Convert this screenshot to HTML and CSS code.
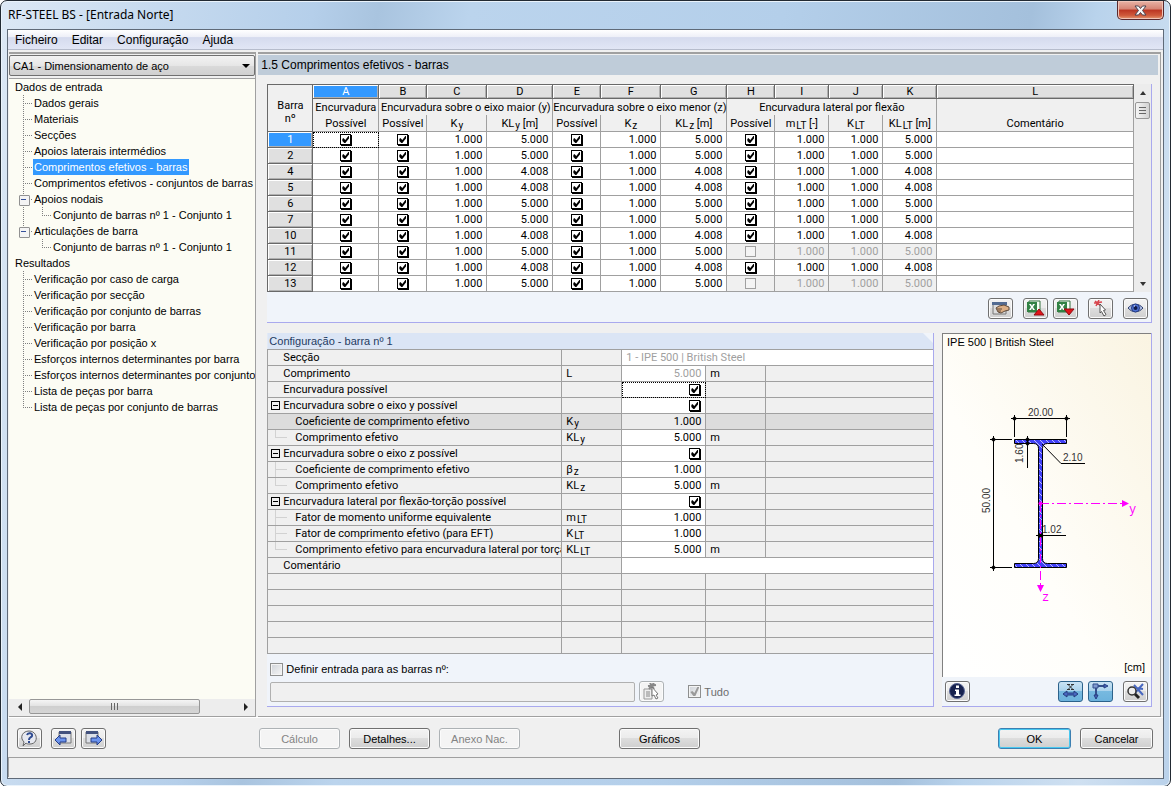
FILE: index.html
```html
<!DOCTYPE html>
<html lang="pt">
<head>
<meta charset="utf-8">
<title>RF-STEEL BS - [Entrada Norte]</title>
<link rel="stylesheet" href="styles.css">
</head>
<body>
<div class="window">
  <header class="titlebar">
    <h1 class="window-title">RF-STEEL BS - [Entrada Norte]</h1>
    <button class="close" aria-label="Fechar"><svg width="13" height="11" viewBox="0 0 13 11"><path d="M1 1h3.500l2 2.500 2-2.500H12L8.500 5.500 12 10H8.500l-2-2.500-2 2.500H1l3.500-4.500z" fill="#f8f8f8" stroke="#4d4450"/></svg></button>
  </header>
  <div class="client">
    <nav class="menu">
      <button>Ficheiro</button><button>Editar</button><button>Configuração</button><button>Ajuda</button>
    </nav>
    <main class="workspace">
      <aside class="sidebar">
        <div class="case"><select aria-label="Caso"><option>CA1 - Dimensionamento de aço</option></select></div>
        <div class="tree-view">
          <ul class="tree">
            <li>Dados de entrada
              <ul>
                <li>Dados gerais</li>
                <li>Materiais</li>
                <li>Secções</li>
                <li>Apoios laterais intermédios</li>
                <li><span class="selected">Comprimentos efetivos - barras</span></li>
                <li>Comprimentos efetivos - conjuntos de barras</li>
                <li class="open">Apoios nodais
                  <ul><li>Conjunto de barras nº 1 - Conjunto 1</li></ul>
                </li>
                <li class="open">Articulações de barra
                  <ul><li>Conjunto de barras nº 1 - Conjunto 1</li></ul>
                </li>
              </ul>
            </li>
            <li>Resultados
              <ul>
                <li>Verificação por caso de carga</li>
                <li>Verificação por secção</li>
                <li>Verificação por conjunto de barras</li>
                <li>Verificação por barra</li>
                <li>Verificação por posição x</li>
                <li>Esforços internos determinantes por barra</li>
                <li>Esforços internos determinantes por conjunto</li>
                <li>Lista de peças por barra</li>
                <li>Lista de peças por conjunto de barras</li>
              </ul>
            </li>
          </ul>
        </div>
        <div class="hscroll">
          <svg width="18" height="16" viewBox="0 0 18 16"><path d="M11 4v8L7 8z" fill="#222"/></svg>
          <div class="hthumb"><i></i><i></i><i></i></div>
          <svg class="end" width="18" height="16" viewBox="0 0 18 16"><path d="M7 4v8l4-4z" fill="#222"/></svg>
        </div>
      </aside>

      <section class="page">
        <h2 class="page-title">1.5 Comprimentos efetivos - barras</h2>
        <div class="page-body">
          <div class="grid-box">
            <div class="grid-row">
              <table class="grid">
                <colgroup><col class="w45"><col class="w66"><col class="w48"><col class="w60"><col class="w66"><col class="w48"><col class="w60"><col class="w66"><col class="w48"><col class="w54"><col class="w54"><col class="w54"><col></colgroup>
                <thead>
                  <tr class="letters"><th rowspan="3" class="corner">Barra<br>nº</th><th class="active">A</th><th>B</th><th>C</th><th>D</th><th>E</th><th>F</th><th>G</th><th>H</th><th>I</th><th>J</th><th>K</th><th>L</th></tr>
                  <tr class="groups"><th>Encurvadura</th><th colspan="3">Encurvadura sobre o eixo maior (y)</th><th colspan="3">Encurvadura sobre o eixo menor (z)</th><th colspan="4">Encurvadura lateral por flexão</th><th></th></tr>
                  <tr class="names"><th>Possível</th><th>Possível</th><th>K<sub>y</sub></th><th>KL<sub>y</sub> [m]</th><th>Possível</th><th>K<sub>z</sub></th><th>KL<sub>z</sub> [m]</th><th>Possível</th><th>m<sub>LT</sub> [-]</th><th>K<sub>LT</sub></th><th>KL<sub>LT</sub> [m]</th><th>Comentário</th></tr>
                </thead>
                <tbody>
                  <tr><th class="active">1</th><td class="c focus"><input type="checkbox" checked aria-label="Barra 1, A"></td><td class="c"><input type="checkbox" checked aria-label="Barra 1, B"></td><td>1.000</td><td>5.000</td><td class="c"><input type="checkbox" checked aria-label="Barra 1, E"></td><td>1.000</td><td>5.000</td><td class="c"><input type="checkbox" checked aria-label="Barra 1, H"></td><td>1.000</td><td>1.000</td><td>5.000</td><td></td></tr>
                  <tr><th>2</th><td class="c"><input type="checkbox" checked aria-label="Barra 2, A"></td><td class="c"><input type="checkbox" checked aria-label="Barra 2, B"></td><td>1.000</td><td>5.000</td><td class="c"><input type="checkbox" checked aria-label="Barra 2, E"></td><td>1.000</td><td>5.000</td><td class="c"><input type="checkbox" checked aria-label="Barra 2, H"></td><td>1.000</td><td>1.000</td><td>5.000</td><td></td></tr>
                  <tr><th>4</th><td class="c"><input type="checkbox" checked aria-label="Barra 4, A"></td><td class="c"><input type="checkbox" checked aria-label="Barra 4, B"></td><td>1.000</td><td>4.008</td><td class="c"><input type="checkbox" checked aria-label="Barra 4, E"></td><td>1.000</td><td>4.008</td><td class="c"><input type="checkbox" checked aria-label="Barra 4, H"></td><td>1.000</td><td>1.000</td><td>4.008</td><td></td></tr>
                  <tr><th>5</th><td class="c"><input type="checkbox" checked aria-label="Barra 5, A"></td><td class="c"><input type="checkbox" checked aria-label="Barra 5, B"></td><td>1.000</td><td>4.008</td><td class="c"><input type="checkbox" checked aria-label="Barra 5, E"></td><td>1.000</td><td>4.008</td><td class="c"><input type="checkbox" checked aria-label="Barra 5, H"></td><td>1.000</td><td>1.000</td><td>4.008</td><td></td></tr>
                  <tr><th>6</th><td class="c"><input type="checkbox" checked aria-label="Barra 6, A"></td><td class="c"><input type="checkbox" checked aria-label="Barra 6, B"></td><td>1.000</td><td>5.000</td><td class="c"><input type="checkbox" checked aria-label="Barra 6, E"></td><td>1.000</td><td>5.000</td><td class="c"><input type="checkbox" checked aria-label="Barra 6, H"></td><td>1.000</td><td>1.000</td><td>5.000</td><td></td></tr>
                  <tr><th>7</th><td class="c"><input type="checkbox" checked aria-label="Barra 7, A"></td><td class="c"><input type="checkbox" checked aria-label="Barra 7, B"></td><td>1.000</td><td>5.000</td><td class="c"><input type="checkbox" checked aria-label="Barra 7, E"></td><td>1.000</td><td>5.000</td><td class="c"><input type="checkbox" checked aria-label="Barra 7, H"></td><td>1.000</td><td>1.000</td><td>5.000</td><td></td></tr>
                  <tr><th>10</th><td class="c"><input type="checkbox" checked aria-label="Barra 10, A"></td><td class="c"><input type="checkbox" checked aria-label="Barra 10, B"></td><td>1.000</td><td>4.008</td><td class="c"><input type="checkbox" checked aria-label="Barra 10, E"></td><td>1.000</td><td>4.008</td><td class="c"><input type="checkbox" checked aria-label="Barra 10, H"></td><td>1.000</td><td>1.000</td><td>4.008</td><td></td></tr>
                  <tr><th>11</th><td class="c"><input type="checkbox" checked aria-label="Barra 11, A"></td><td class="c"><input type="checkbox" checked aria-label="Barra 11, B"></td><td>1.000</td><td>5.000</td><td class="c"><input type="checkbox" checked aria-label="Barra 11, E"></td><td>1.000</td><td>5.000</td><td class="c off"><input type="checkbox" disabled aria-label="Barra 11, H"></td><td class="off">1.000</td><td class="off">1.000</td><td class="off">5.000</td><td></td></tr>
                  <tr><th>12</th><td class="c"><input type="checkbox" checked aria-label="Barra 12, A"></td><td class="c"><input type="checkbox" checked aria-label="Barra 12, B"></td><td>1.000</td><td>4.008</td><td class="c"><input type="checkbox" checked aria-label="Barra 12, E"></td><td>1.000</td><td>4.008</td><td class="c"><input type="checkbox" checked aria-label="Barra 12, H"></td><td>1.000</td><td>1.000</td><td>4.008</td><td></td></tr>
                  <tr><th>13</th><td class="c"><input type="checkbox" checked aria-label="Barra 13, A"></td><td class="c"><input type="checkbox" checked aria-label="Barra 13, B"></td><td>1.000</td><td>5.000</td><td class="c"><input type="checkbox" checked aria-label="Barra 13, E"></td><td>1.000</td><td>5.000</td><td class="c off"><input type="checkbox" disabled aria-label="Barra 13, H"></td><td class="off">1.000</td><td class="off">1.000</td><td class="off">5.000</td><td></td></tr>
                </tbody>
              </table>
              <div class="vscroll">
                <svg width="16" height="18" viewBox="0 0 16 18"><path d="M5 11h6L8 7z" fill="#333"/></svg>
                <div class="vthumb"><i></i><i></i><i></i></div>
                <svg class="end" width="16" height="18" viewBox="0 0 16 18"><path d="M5 8h6l-3 4z" fill="#333"/></svg>
              </div>
            </div>
            <div class="tools grid-tools">
              <button class="icon" aria-label="Editar"><svg width="19" height="17" viewBox="0 0 19 17"><path d="M2 3h13v11H2z" fill="#ddd" stroke="#777"/><path d="M1 2h15v3H1z" fill="#536b91"/><path d="M5 8l3-2 5-1 5 2v3l-4 1-4 2-3-1z" fill="#dcae84" stroke="#5e4a3a"/><path d="M6 9h5M7 11h3" stroke="#5e4a3a"/></svg></button>
              <div class="pair">
                <button class="icon" aria-label="Exportar para Excel"><svg width="19" height="17" viewBox="0 0 19 17"><path d="M3 1h11v11H2z" fill="#f6fff5" stroke="#347541"/><path d="M1 2h10v10H1z" fill="#328244"/><path d="M3 4h2l1 2 1-2h2L7 7l2 3H7L6 8l-1 2H3l2-3z" fill="#fff"/><path d="M8 15h10l-5-6z" fill="#e31318" stroke="#8f0b12"/></svg></button>
                <button class="icon" aria-label="Importar de Excel"><svg width="19" height="17" viewBox="0 0 19 17"><path d="M3 1h11v11H2z" fill="#f6fff5" stroke="#347541"/><path d="M1 2h10v10H1z" fill="#328244"/><path d="M3 4h2l1 2 1-2h2L7 7l2 3H7L6 8l-1 2H3l2-3z" fill="#fff"/><path d="M8 9h10l-5 6z" fill="#e31318" stroke="#8f0b12"/></svg></button>
              </div>
              <button class="icon" aria-label="Selecionar"><svg width="19" height="17" viewBox="0 0 19 17"><path d="M3 3l8-1M4 1l6 5M8 0L5 6" stroke="#d8454d" stroke-width="1.500"/><path d="M9 4l5.500 6-2 .5 2.500 4-2 1.500-2.500-4.500-1.500 1.500z" fill="#fff" stroke="#555"/></svg></button>
              <button class="icon" aria-label="Ver"><svg width="19" height="17" viewBox="0 0 19 17"><path d="M2 8c4-5 11-5 15 0-4 5-11 5-15 0z" fill="#a6b5de" stroke="#33446f"/><circle cx="9.500" cy="8" r="4" fill="#4d70d2" stroke="#233a82"/><circle cx="9.500" cy="8" r="2" fill="#101a4a"/><path d="M8 6h1" stroke="#fff"/></svg></button>
            </div>
          </div>

          <div class="lower">
            <section class="config">
              <h3>Configuração - barra nº 1</h3>
              <table class="props">
                <colgroup><col class="name"><col class="w60"><col class="w84"><col class="w60"><col></colgroup>
                <tbody>
                  <tr><th>Secção</th><td></td><td colspan="3" class="field dim left">1 - IPE 500 | British Steel</td></tr>
                  <tr><th>Comprimento</th><td>L</td><td class="field num dim">5.000</td><td>m</td><td></td></tr>
                  <tr><th>Encurvadura possível</th><td></td><td class="field num focus"><input type="checkbox" checked aria-label="Encurvadura possível"></td><td></td><td></td></tr>
                  <tr><th class="group">Encurvadura sobre o eixo y possível</th><td></td><td class="field num"><input type="checkbox" checked aria-label="Encurvadura sobre o eixo y possível"></td><td></td><td></td></tr>
                  <tr class="hot"><th class="leaf">Coeficiente de comprimento efetivo</th><td>K<sub>y</sub></td><td class="field num">1.000</td><td></td><td></td></tr>
                  <tr><th class="leaf last">Comprimento efetivo</th><td>KL<sub>y</sub></td><td class="field num">5.000</td><td>m</td><td></td></tr>
                  <tr><th class="group">Encurvadura sobre o eixo z possível</th><td></td><td class="field num"><input type="checkbox" checked aria-label="Encurvadura sobre o eixo z possível"></td><td></td><td></td></tr>
                  <tr><th class="leaf">Coeficiente de comprimento efetivo</th><td>β<sub>z</sub></td><td class="field num">1.000</td><td></td><td></td></tr>
                  <tr><th class="leaf last">Comprimento efetivo</th><td>KL<sub>z</sub></td><td class="field num">5.000</td><td>m</td><td></td></tr>
                  <tr><th class="group">Encurvadura lateral por flexão-torção possível</th><td></td><td class="field num"><input type="checkbox" checked aria-label="Encurvadura lateral por flexão-torção possível"></td><td></td><td></td></tr>
                  <tr><th class="leaf">Fator de momento uniforme equivalente</th><td>m<sub>LT</sub></td><td class="field num">1.000</td><td></td><td></td></tr>
                  <tr><th class="leaf">Fator de comprimento efetivo (para EFT)</th><td>K<sub>LT</sub></td><td class="field num">1.000</td><td></td><td></td></tr>
                  <tr><th class="leaf last">Comprimento efetivo para encurvadura lateral por torção</th><td>KL<sub>LT</sub></td><td class="field num">5.000</td><td>m</td><td></td></tr>
                  <tr><th>Comentário</th><td></td><td colspan="3" class="field"></td></tr>
                  <tr><th></th><td></td><td></td><td></td><td></td></tr>
                  <tr><th></th><td></td><td></td><td></td><td></td></tr>
                  <tr><th></th><td></td><td></td><td></td><td></td></tr>
                  <tr><th></th><td></td><td></td><td></td><td></td></tr>
                  <tr><th></th><td></td><td></td><td></td><td></td></tr>
                </tbody>
              </table>
              <div class="define">
                <label class="check"><input type="checkbox" class="win">Definir entrada para as barras nº:</label>
                <div class="define-row">
                  <input type="text" class="members" disabled aria-label="Barras nº">
                  <button class="icon" disabled aria-label="Escolher barras"><svg width="19" height="17" viewBox="0 0 19 17"><path d="M2 6h8v10H2z" fill="#eee" stroke="#999"/><path d="M4 9h4M4 11h4M4 13h4" stroke="#888"/><path d="M6 3l8-1M8 0l4 6M12 0L7 6" stroke="#888" stroke-width="2"/><path d="M10 4l6 7-2 1 2 3-2 1-2-4-2 1z" fill="#fff" stroke="#777"/></svg></button>
                  <label class="check all"><input type="checkbox" class="win" checked disabled>Tudo</label>
                </div>
              </div>
            </section>

            <section class="section-view">
              <div class="canvas">
                <p>IPE 500 | British Steel</p>
                <svg class="beam" viewBox="943 400 208 210" role="img" aria-label="Secção IPE 500">
                  <defs><pattern id="hatch" width="6" height="6" patternUnits="userSpaceOnUse"><path d="M0 0h6v6H0z" fill="#4040f8"/><path d="M0 0l6 6" stroke="#b8b8ff"/></pattern></defs>
                  <path d="M1014.500 439.500h52v4h-19q-5 0-5 5v110q0 5 5 5h19v4h-52v-4h19q5 0 5-5v-110q0-5-5-5h-19z" fill="url(#hatch)" stroke="#000"/>
                  <g fill="none" stroke="#000">
                    <path d="M1011 418.500h59M1014.500 415v22M1066.500 415v22M993.500 436v135M990 439.500h22M990 567.500h22M1027.500 436v32M1036 535.500h30M1042 444l19 19.500h24"/>
                  </g>
                  <path d="M1012 418.500l2.500-2.500 2.500 2.500-2.500 2.500zM1064 418.500l2.500-2.500 2.500 2.500-2.500 2.500zM991 439.500l2.500-2.500 2.500 2.500-2.500 2.500zM991 567.500l2.500-2.500 2.500 2.500-2.500 2.500zM1025 439.500l2.500-2.500 2.500 2.500-2.500 2.500zM1025 443.500l2.500-2.500 2.500 2.500-2.500 2.500zM1037 535.500l3.500-3 3.500 3-3.500 3z"/>
                  <g fill="none" stroke="#f0f" stroke-dasharray="9 3 2 3"><path d="M1040 503.500h82M1040.500 503v82"/></g>
                  <path d="M1122 500v7l7-3.500zM1037 585h7l-3.500 7z" fill="#f0f"/><circle cx="1040.500" cy="503.500" r="2" fill="#f0f"/>
                  <g class="dims"><text x="1028" y="416">20.00</text><text x="1063" y="461">2.10</text><text x="1042" y="533">1.02</text><text transform="translate(990 513) rotate(-90)">50.00</text><text transform="translate(1023 463) rotate(-90)">1.60</text></g>
                  <g class="axes"><text x="1129" y="513">y</text><text x="1042" y="601">z</text></g>
                </svg>
                <p class="unit">[cm]</p>
              </div>
              <div class="tools view-tools">
                <button class="icon first" aria-label="Informação"><svg width="19" height="17" viewBox="0 0 19 17"><circle cx="9" cy="8" r="7.500" fill="#17224f" stroke="#5a6796"/><path d="M8 2.500h3v2.500H8zM7 6.500h4v5h1.500V13H6.500v-1.500H8V8H7z" fill="#fff"/></svg></button>
                <div class="pair">
                  <button class="icon on" aria-label="Cotas"><svg width="19" height="17" viewBox="0 0 19 17"><path d="M7 1.500l5 5M12 1.500l-5 5M6 1.500h3M10 1.500h3M6 6.500h3M10 6.500h3" stroke="#333"/><path d="M2 11l4-3v2h7V8l4 3-4 3v-2H6v2z" fill="#4868c0" stroke="#263d80"/></svg></button>
                  <button class="icon on" aria-label="Eixos"><svg width="19" height="17" viewBox="0 0 19 17"><path d="M4 3h11M5 3v11" stroke="#35508c" stroke-width="2"/><path d="M13 1l4 2-4 2zM3 12h4l-2 4z" fill="#4868c0" stroke="#263d80"/><path d="M2 1h5v4H2z" fill="#7f9ad0" stroke="#35508c"/></svg></button>
                </div>
                <button class="icon" aria-label="Ver tudo"><svg width="19" height="17" viewBox="0 0 19 17"><path d="M8 2l9 10M17 1L8 11M10 5l7 1" stroke="#4868c0" stroke-width="2"/><circle cx="6" cy="8" r="4" fill="#eee" stroke="#333" stroke-width="1.500"/><path d="M9 11l4 4" stroke="#222" stroke-width="3"/></svg></button>
              </div>
            </section>
          </div>
        </div>
      </section>
    </main>
    <footer class="actions">
      <button class="icon help" aria-label="Ajuda"><svg width="19" height="17" viewBox="0 0 19 17"><path d="M3 16l1-4c-5-5-1-11 5-11 9 0 10 13 1 13-2 0-3 0-4-1z" fill="#e7e9f0" stroke="#666"/><path d="M7 5c1-3 6-2 5 1-1 2-3 1-3 4M9 11v2" fill="none" stroke="#304c91" stroke-width="2"/></svg></button>
      <div class="pair nav-pair">
        <button class="icon" aria-label="Anterior"><svg width="19" height="17" viewBox="0 0 19 17"><path d="M5 2h12v11H5z" fill="#dce0e8" stroke="#777"/><path d="M5 1h12v3H5z" fill="#43527e"/><path d="M1 10l5-5v3h6v4H6v3z" fill="#6b93ee" stroke="#243d86"/></svg></button>
        <button class="icon" aria-label="Seguinte"><svg width="19" height="17" viewBox="0 0 19 17"><path d="M2 2h12v11H2z" fill="#dce0e8" stroke="#777"/><path d="M2 1h12v3H2z" fill="#43527e"/><path d="M18 10l-5-5v3H7v4h6v3z" fill="#6b93ee" stroke="#243d86"/></svg></button>
      </div>
      <div class="commands">
        <button class="btn" disabled>Cálculo</button>
        <button class="btn">Detalhes...</button>
        <button class="btn" disabled>Anexo Nac.</button>
        <button class="btn charts">Gráficos</button>
      </div>
      <div class="confirm">
        <button class="btn default">OK</button>
        <button class="btn">Cancelar</button>
      </div>
    </footer>
    <div class="status"></div>
  </div>
</div>
</body>
</html>
```

FILE: styles.css
```css
* { box-sizing: border-box; }
body {
  margin: 0;
  font: 11px/16px "Liberation Sans", Arial, sans-serif;
  color: #000;
  background: #fff;
}
h1, h2, h3, p, ul { margin: 0; padding: 0; font-weight: normal; }
button, input, select { font: inherit; color: inherit; margin: 0; }
svg { display: block; }
ul { list-style: none; }

/* Window frame */
.window {
  min-height: 100vh;
  display: flex;
  flex-direction: column;
  padding: 0 6px 7px;
  border: 1px solid #222a33;
  border-radius: 7px;
  background: linear-gradient(100deg, #dce8f5 0, #c6daef 12%, #b5cfea 24%, #a9c4df 29%, #bbd4ed 36%, #b4cfea 60%, #a4c0dc 79%, #b9d3ec 84%, #cfe0f1 93%, #b9d1ea 100%);
  box-shadow: inset 0 0 0 1px #eaf3fb;
}
.titlebar { display: flex; justify-content: space-between; height: 28px; }
.window-title { padding: 6px 1px; font: 12px/16px "Noto Sans", sans-serif; }
.close {
  width: 47px;
  height: 19px;
  padding: 0;
  display: grid;
  place-items: center;
  border: 1px solid #59292d;
  border-top: 0;
  border-radius: 0 0 5px 5px;
  background: linear-gradient(#e9b3a6, #d68474 45%, #bb3522 50%, #cf5a3c 80%, #e39a72);
  box-shadow: inset 0 0 0 1px #f0c4b8;
}
.client {
  flex: 1;
  display: flex;
  flex-direction: column;
  border: 1px solid #5f6a78;
  background: #f0f0f0;
}
.menu {
  display: flex;
  height: 20px;
  border-bottom: 1px solid #b6bccc;
  background: linear-gradient(#fff, #eef0f8 35%, #d5dbee 40%, #e1e6f5);
}
.menu button {
  padding: 1px 7px 0;
  border: 0;
  background: none;
  font-size: 12px;
  line-height: 18px;
}

/* Navigator */
.workspace { flex: 1; display: flex; gap: 2px; padding: 2px 0 0 1px; }
.sidebar {
  flex: 0 0 247px;
  display: flex;
  flex-direction: column;
  border: 1px solid #a0a0a0;
  border-top: 2px solid #a0a0a0;
  border-left: 0;
  background: #f0f0f0;
}
.case { position: relative; padding: 1px 0 2px; border-bottom: 1px solid #a0a0a0; }
.case select {
  appearance: none;
  display: block;
  width: 100%;
  height: 21px;
  padding: 0 3px;
  border: 1px solid #707070;
  border-radius: 2px;
  background: linear-gradient(#f3f3f3, #e6e6e6 50%, #dadada 51%, #d0d0d0);
}
.case::after {
  content: "";
  position: absolute;
  right: 5px;
  top: 10px;
  border: 4px solid transparent;
  border-top-color: #000;
  border-bottom: 0;
}
.tree-view { flex: 1; background: #fcfcf4; overflow: hidden; }
.tree { padding-left: 6px; white-space: nowrap; }
.tree ul { padding-left: 8px; }
.tree li li {
  padding-left: 11px;
  background:
    repeating-linear-gradient(90deg, #808080 0 1px, transparent 1px 2px) 0 8px / 9px 1px no-repeat,
    repeating-linear-gradient(#808080 0 1px, transparent 1px 2px) 0 0 / 1px 100% no-repeat;
}
.tree li li:last-child {
  background-size: 9px 1px, 1px 8px;
}
.tree .open { position: relative; }
.tree .open::before {
  content: "";
  position: absolute;
  left: -4px;
  top: 4px;
  width: 9px;
  height: 9px;
  border: 1px solid #919191;
  border-radius: 1px;
  background: linear-gradient(#35519a, #35519a) 1px 3px / 5px 1px no-repeat #f4f4f4;
}
.selected { display: inline-block; margin-left: -1px; padding: 0 2px 0 1px; background: #3399ff; color: #fff; }
.hscroll { display: flex; height: 17px; padding-left: 2px; background: #ededed; }
.hthumb, .vthumb {
  display: flex;
  align-items: center;
  justify-content: center;
  gap: 1px;
  border: 1px solid #979797;
  border-radius: 2px;
}
.hthumb { width: 171px; height: 15px; background: linear-gradient(#f5f5f5, #e3e3e3 45%, #cfcfcf 50%, #d6d6d6); }
.hthumb i { width: 2px; height: 7px; border-left: 1px solid #666; }
.end { margin-left: auto; }

/* Page */
.page {
  flex: 1;
  min-width: 0;
  padding-bottom: 9px;
  border: 1px solid #a0a0a0;
  border-top: 2px solid #a0a0a0;
  border-left: 0;
  margin-right: 2px;
}
.page-title {
  margin: 1px 2px 9px 0;
  padding: 2px 3px;
  background: #bfccd9;
  font-size: 12px;
}
.page-body { padding: 0 8px 0 9px; display: flex; flex-direction: column; gap: 10px; }
.grid-box { border: solid #a9a9ee; border-width: 0 1px 1px 0; background: #f0f4fa; }
.grid-row { display: flex; align-items: stretch; background: #f0f0f0; }
.grid, .props { font-family: Roboto, "Liberation Sans", sans-serif; }
.grid {
  flex: 1;
  width: 100%;
  min-width: 0;
  table-layout: fixed;
  border-spacing: 0;
  border-left: 1px solid #696969;
  border-top: 1px solid #696969;
}
.w45 { width: 45px; } .w48 { width: 48px; } .w54 { width: 54px; }
.w60 { width: 60px; } .w66 { width: 66px; } .w84 { width: 84px; }
.grid th, .grid td {
  height: 16px;
  padding: 0;
  line-height: 15px;
  font-weight: normal;
  white-space: nowrap;
  border-right: 1px solid #a0a0a0;
  border-bottom: 1px solid #a0a0a0;
}
.grid td { padding-right: 4px; text-align: right; background: #fff; }
.grid .letters th {
  height: 14px;
  line-height: 13px;
  background: #e0e0e0;
  border-color: #696969;
  box-shadow: inset 1px 1px #fff, inset -1px -1px #b0b0b0;
}
.grid .letters .corner { padding-top: 8px; line-height: 13px; background: #f0f0f0; box-shadow: none; }
.grid .groups th { height: 16px; border-bottom: 0; }
.grid .names th { height: 17px; }
.grid tbody th {
  background: #e0e0e0;
  border-color: #696969;
  box-shadow: inset 1px 1px #fff, inset -1px -1px #b0b0b0;
}
.grid .letters .active, .grid tbody .active { background: #3399ff; color: #fff; }
.grid .c { padding: 0; text-align: center; }
.grid .off { background: #f0f0f0; color: #a0a0a0; }
.grid .focus, .props .focus { outline: 1px dotted #000; outline-offset: -1px; }
sub { font-size: 10px; line-height: 1px; vertical-align: -2px; padding-left: 1px; }

/* Check boxes inside tables */
.grid input, .props input {
  appearance: none;
  display: block;
  width: 11px;
  height: 11px;
  margin: 0 auto;
  border: 1px solid #000;
  background: #fff;
  box-shadow: 1px 1px #000;
}
.props input { margin: 0 1px 0 auto; }
.grid input:disabled { border-color: #a0a0a0; box-shadow: none; background: #f4f4f4; }
.grid input:checked::before, .props input:checked::before {
  content: "";
  display: block;
  width: 7px;
  height: 7px;
  margin: 1px;
  background: #000;
  clip-path: polygon(0 3px, 1px 2px, 3px 4px, 6px 0, 7px 0, 7px 2px, 3px 7px, 2px 7px, 0 5px);
}
.vscroll {
  flex: 0 0 17px;
  display: flex;
  flex-direction: column;
  align-items: center;
  background: #ececec;
}
.vthumb { flex-direction: column; width: 15px; height: 17px; background: linear-gradient(90deg, #f5f5f5, #d2d2d2); }
.vthumb i { width: 7px; height: 2px; border-top: 1px solid #666; }
.vscroll .end { margin: auto 0 0; }

/* Tool buttons */
.tools { display: flex; align-items: center; justify-content: flex-end; gap: 10px; height: 30px; padding: 0 3px; background: #f0f4fa; }
.grid-tools { padding-top: 2px; }
.pair { display: flex; gap: 5px; }
.icon {
  width: 25px;
  height: 21px;
  padding: 0;
  display: grid;
  place-items: center;
  border: 1px solid #707070;
  border-radius: 3px;
  background: linear-gradient(#f3f3f3, #ebebeb 48%, #dddddd 50%, #cfcfcf);
  box-shadow: inset 0 0 0 1px #fbfbfb;
}
.icon:disabled { border-color: #adb2b5; background: #f4f4f4; }
.icon.on { border-color: #2c628b; background: linear-gradient(#c9e3f4, #a9d2ec 48%, #77b9e0 50%, #6cb2dc); box-shadow: none; }

/* Member settings */
.lower { display: flex; gap: 8px; align-items: stretch; }
.config { flex: 1; min-width: 0; border: solid #a9a9ee; border-width: 0 1px 1px 0; background: #f0f4fa; }
.config h3 {
  height: 16px;
  padding: 0 2px;
  background: #dbe5f5;
  color: #1f3b63;
  font-size: 11px;
  clip-path: polygon(0 0, calc(100% - 10px) 0, 100% 10px, 100% 100%, 0 100%);
}
.props {
  width: 100%;
  table-layout: fixed;
  border-spacing: 0;
  border-left: 1px solid #a0a0a0;
  border-top: 1px solid #a0a0a0;
  background: #f0f0f0;
}
.props .name { width: 294px; }
.props th, .props td {
  height: 16px;
  padding: 0 4px;
  line-height: 15px;
  font-weight: normal;
  text-align: left;
  white-space: nowrap;
  border-right: 1px solid #a0a0a0;
  border-bottom: 1px solid #a0a0a0;
}
.props td:last-child { border-right: 0; }
.props th { padding: 0 0 0 15px; overflow: hidden; }
.props .hot { background: #dcdcdc; }
.props .hot .field { background: #ececec; }
.props .field { background: #fff; }
.props .num { text-align: right; }
.props .dim { color: #a0a0a0; }
.props .group {
  background:
    linear-gradient(#000, #000) 5px 7px / 5px 1px no-repeat,
    linear-gradient(#f0f0f0, #f0f0f0) 4px 4px / 7px 7px no-repeat,
    linear-gradient(#000, #000) 3px 3px / 9px 9px no-repeat;
}
.props .leaf {
  padding-left: 27px;
  background:
    linear-gradient(#d2d2d2, #d2d2d2) 7px 7px / 12px 1px no-repeat,
    linear-gradient(#d2d2d2, #d2d2d2) 7px 0 / 1px 100% no-repeat;
}
.props .last { background-size: 12px 1px, 1px 7px; }
.props .hot .leaf { background: none; }
.define { display: flex; flex-direction: column; gap: 4px; padding: 7px 3px 4px; }
.check { display: flex; align-items: center; gap: 3px; }
.define-row { display: flex; align-items: center; gap: 4px; }
.members {
  width: 365px;
  height: 20px;
  border: 1px solid #b0b0b0;
  border-radius: 2px;
  background: #f0f0f0;
}
.win {
  appearance: none;
  width: 13px;
  height: 13px;
  border: 1px solid #8e8f8f;
  background: linear-gradient(135deg, #cfd3d9, #f6f6f6);
  box-shadow: inset 0 0 0 1px #f4f4f4;
}
.win:checked::before {
  content: "";
  display: block;
  width: 9px;
  height: 9px;
  margin: 1px;
  background: #9a9a9a;
  clip-path: polygon(0 5px, 2px 4px, 4px 6px, 7px 0, 9px 0, 5px 9px, 3px 9px);
}
.all { margin-left: 20px; color: #6d6d6d; }

/* Cross-section view */
.section-view { flex: 0 0 210px; display: flex; flex-direction: column; border: solid #a9a9ee; border-width: 0 1px 1px 0; }
.canvas {
  flex: 1;
  display: flex;
  flex-direction: column;
  justify-content: space-between;
  padding: 0 0 2px;
  border: solid #808080;
  border-width: 1px 0 0 1px;
  background: linear-gradient(60deg, #fff, #fffefa 40%, #faf4e2);
}
.canvas p { padding: 0 4px; }
.canvas .unit { padding: 0 6px; text-align: right; }
.beam { width: 100%; }
.dims { font-size: 10px; fill: #333; }
.axes { font: 12px "Liberation Mono", monospace; fill: #f0f; }
.view-tools { height: 29px; }
.first { margin-right: auto; }

/* Bottom bar */
.actions { display: flex; align-items: center; height: 40px; padding: 2px 10px 0 9px; border-top: 1px solid #fff; }
.nav-pair { margin-left: 9px; }
.commands { display: flex; gap: 9px; margin-left: 153px; }
.charts { margin-left: 90px; }
.confirm { display: flex; gap: 9px; margin-left: auto; }
.btn {
  width: 81px;
  height: 21px;
  padding: 0;
  border: 1px solid #707070;
  border-radius: 3px;
  background: linear-gradient(#f3f3f3, #ebebeb 48%, #dddddd 50%, #cfcfcf);
  box-shadow: inset 0 0 0 1px #fbfbfb;
}
.btn:disabled { border-color: #adb2b5; background: #f4f4f4; color: #838383; }
.confirm .btn { width: 73px; }
.confirm .default { border-color: #3c7fb1; box-shadow: inset 0 0 0 1px #48c8f0; }
.status { height: 20px; border-top: 1px solid #a0a0a0; border-left: 1px solid #a0a0a0; margin-bottom: 1px; }
```
